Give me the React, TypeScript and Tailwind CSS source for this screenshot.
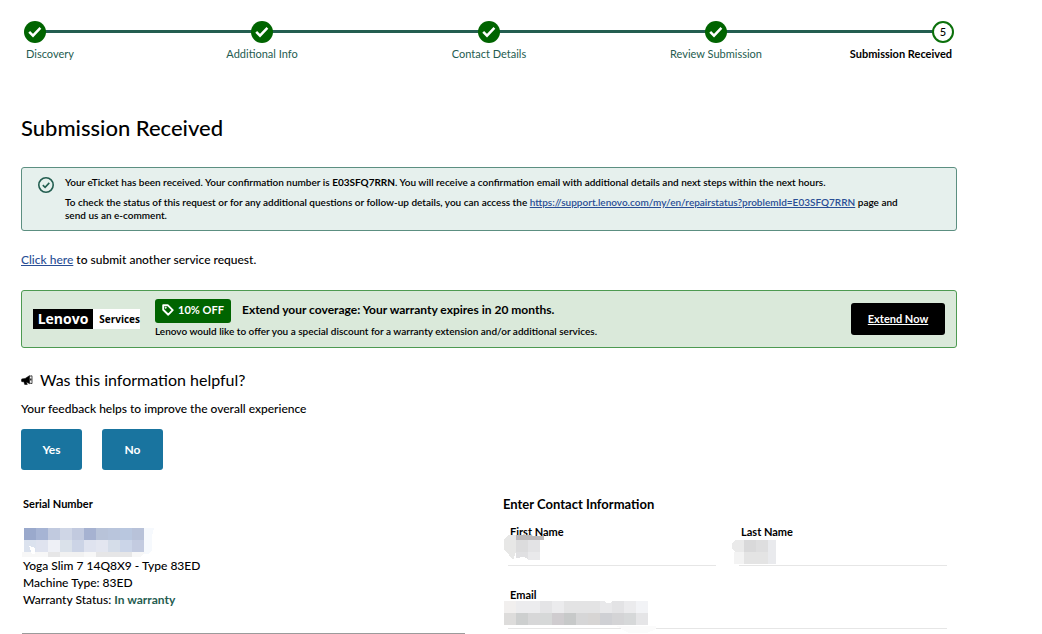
import React from 'react';

const steps = ['Discovery', 'Additional Info', 'Contact Details', 'Review Submission', 'Submission Received'];

const serialMask = [
  ['#9aa9cc', '#a6b4d4', '#c1cadf', '#cfd6e6', '#c2cadf', '#a6b2d1', '#b8c3d9', '#b9c5dc', '#b9c7df', '#b8c2d9'],
  ['#dbe2ee', '#dfe3ef', '#eef0f6', '#dae1ea', '#ccd4e6', '#dfe3ef', '#e3e6f0', '#d5dde9', '#cbd5e8', '#c3cbe0'],
];

const emailMask = [
  ['#f1efee', '#ececee', '#ececee', '#e4e4e6', '#ebebed', '#e3e3e4', '#e3e3e4', '#e3e3e4', '#e8e8ea', '#e3e3e5', '#ebebed', '#f2f3f6'],
  ['#dddcdb', '#cdcfcf', '#d7d7d8', '#d6d8d8', '#cfcccf', '#c7c9c9', '#d6d6d7', '#d7d5d4', '#cfd0d4', '#d4d4d6', '#d6d8d9', '#e5e5e7'],
];

function Cells({ rows, x = 0, y = 0 }: { rows: string[][]; x?: number; y?: number }) {
  return (
    <>
      {rows.map((row, r) =>
        row.map((fill, c) => (
          <rect key={`${r}-${c}`} x={x + c * 12} y={y + r * 12} width="12" height="12" fill={fill} />
        ))
      )}
    </>
  );
}

function StepCircle({ number, done }: { number: number; done: boolean }) {
  if (!done) {
    return (
      <span className="flex h-[22px] w-[22px] items-center justify-center rounded-full border-2 border-[#0b700b] bg-white text-[11px] font-medium text-black">
        {number}
      </span>
    );
  }
  return (
    <span className="flex h-[22px] w-[22px] items-center justify-center rounded-full bg-[#006400]">
      <svg viewBox="0 0 14 12" className="h-3 w-3.5" fill="none" stroke="#fff" strokeWidth="2.5">
        <path d="M1.2 5.8 5 9.6 12.4 1.8" />
      </svg>
    </span>
  );
}

function Stepper() {
  return (
    <nav aria-label="Progress" className="relative mx-3.5">
      <div className="absolute inset-x-0 top-[9px] h-[3px] bg-[#235e50]" />
      <ol className="relative grid grid-cols-[1fr_2fr_2fr_2fr_1fr] text-[11px] leading-4 whitespace-nowrap text-[#255c50]">
        {steps.map((label, i) => {
          const first = i === 0;
          const last = i === steps.length - 1;
          return (
            <li
              key={label}
              className={
                first
                  ? '-ml-[11px] flex flex-col items-start gap-[3px]'
                  : last
                    ? '-mr-[11px] flex flex-col items-end gap-[3px] font-bold text-black'
                    : 'flex flex-col items-center gap-[3px]'
              }
            >
              <StepCircle number={i + 1} done={!last} />
              <span className={first ? 'pl-0.5' : last ? 'pr-0.5' : ''}>{label}</span>
            </li>
          );
        })}
      </ol>
    </nav>
  );
}

function ConfirmationAlert() {
  return (
    <div role="status" className="flex gap-2.5 rounded-[3px] border border-[#5c8f81] bg-[#e6f0ed] py-2 pr-12 pl-[15px] text-[10px] leading-[13px] font-semibold">
      <svg viewBox="0 0 18 18" className="h-[18px] w-[18px] shrink-0" fill="none" stroke="#235e50" strokeWidth="1.6">
        <circle cx="9" cy="9" r="7.2" />
        <path d="m5.8 9.2 2.3 2.2 4.2-4.5" />
      </svg>
      <div>
        <p>
          Your eTicket has been received. Your confirmation number is <strong className="font-bold">E03SFQ7RRN</strong>. You will receive a
          confirmation email with additional details and next steps within the next hours.
        </p>
        <p className="mt-[7px]">
          To check the status of this request or for any additional questions or follow-up details, you can access the{' '}
          <a href="#status" className="text-[#294e95] underline">
            https://support.lenovo.com/my/en/repairstatus?problemId=E03SFQ7RRN
          </a>{' '}
          page and send us an e-comment.
        </p>
      </div>
    </div>
  );
}

function LenovoServices() {
  return (
    <div className="flex h-5 shrink-0 items-center bg-white">
      <span className="flex h-5 w-[60px] items-center justify-center bg-black pb-0.5 font-['Open_Sans',sans-serif] text-[14px] font-bold text-white">
        Lenovo
      </span>
      <span className="w-[47px] text-right font-['Open_Sans',sans-serif] text-[10px] font-bold">Services</span>
    </div>
  );
}

function WarrantyBanner() {
  return (
    <section className="flex items-center rounded-[3px] border border-[#4d9a51] bg-[#dae9da] px-[11px] py-2">
      <LenovoServices />
      <div className="ml-[15px] flex-1">
        <div className="flex items-center gap-[11px]">
          <span className="flex h-6 w-[76px] items-center justify-center gap-1 rounded-[3px] bg-[#006400] pb-0.5 text-[11px] font-bold whitespace-nowrap text-white">
            <svg viewBox="0 0 12 12" className="h-3 w-3" fill="none" stroke="#fff" strokeWidth="1.9" strokeLinejoin="round">
              <path d="M1.2 1.2h4.5l5 5-4.4 4.5-5.1-5Z" />
              <circle cx="3.7" cy="3.7" r=".7" fill="#fff" strokeWidth=".6" />
            </svg>
            10% OFF
          </span>
          <h2 className="pb-0.5 text-[12px] leading-5 font-bold">Extend your coverage: Your warranty expires in 20 months.</h2>
        </div>
        <p className="text-[10px] leading-4 font-semibold">
          Lenovo would like to offer you a special discount for a warranty extension and/or additional services.
        </p>
      </div>
      <a href="#extend" className="flex h-8 w-[94px] items-center justify-center rounded-[3px] bg-black text-[11px] font-bold text-white underline">
        Extend Now
      </a>
    </section>
  );
}

function Bullhorn() {
  return (
    <svg viewBox="0 0 12 10" className="h-2.5 w-3" fill="none" stroke="#000" strokeLinejoin="round">
      <path d="M8.6.6v8.2L5.4 6.9l.9 2.6H3.7L2.9 6.7H.8L.3 5.4l.5-1.5 3.4-.5Z" fill="#000" strokeWidth=".5" />
      <path d="M8.6 1.2 11 .8v7.8l-2.4-.5" strokeWidth=".7" />
      <path d="M9.8 3.6v2" strokeWidth="1.2" />
    </svg>
  );
}

function Feedback() {
  return (
    <section className="mt-5">
      <h2 className="flex items-center gap-[7px] text-[16px] leading-6">
        <Bullhorn />
        Was this information helpful?
      </h2>
      <p className="mt-[7px] text-[12px] leading-5 font-medium">Your feedback helps to improve the overall experience</p>
      <div className="mt-2.5 flex gap-5 text-[12px] font-bold text-white">
        <button type="button" className="h-[41px] w-[61px] rounded-[3px] bg-[#19749f]">
          Yes
        </button>
        <button type="button" className="h-[41px] w-[61px] rounded-[3px] bg-[#19749f]">
          No
        </button>
      </div>
    </section>
  );
}

function ProductInfo() {
  return (
    <section className="pr-2.5 pl-px">
      <h3 className="pl-px text-[11px] leading-5 font-bold">Serial Number</h3>
      <svg viewBox="0 0 132 29" className="mt-3.5 h-[29px] w-[132px]" shapeRendering="crispEdges">
        <path d="M122 0h10l-2 8v14l-3 4h-5Z" fill="#f6f9fd" />
        <path d="M0 24h26v5H0Z M62 24h12v5H62Z M110 24h13l-5 5h-8Z" fill="#f7f7f7" />
        <path d="M26 24h12v5H26Z M74 24h36v5H74Z" fill="#e6e6e7" />
        <path d="M38 24h24v5H38Z" fill="#f1f1f1" />
        <Cells rows={serialMask} x={2} />
        <path d="m7 18 6 2v6h-3Z" fill="#fff" />
      </svg>
      <div className="border-b border-[#9b9b9b] pb-[25px] pl-px text-[12px] leading-[17px] font-medium">
        <p>Yoga Slim 7 14Q8X9 - Type 83ED</p>
        <p>Machine Type: 83ED</p>
        <p>
          Warranty Status: <span className="font-bold text-[#255c50]">In warranty</span>
        </p>
      </div>
    </section>
  );
}

function Field({ id, label, type = 'text', children }: { id: string; label: string; type?: string; children: React.ReactNode }) {
  return (
    <div className="relative">
      <label htmlFor={id} className="block pl-0.5 text-[11px] leading-4 font-bold">
        {label}
      </label>
      <input id={id} type={type} className="block h-[26px] w-full border-b border-[#e6e6e6] bg-transparent text-[12px] outline-none" />
      {children}
    </div>
  );
}

function ContactForm() {
  return (
    <section>
      <h3 className="text-[13px] leading-5 font-bold">Enter Contact Information</h3>
      <form className="mt-2.5 grid grid-cols-2 gap-x-[23px] gap-y-[21px] pr-2.5 pl-[5px]">
        <Field id="first-name" label="First Name">
          <svg viewBox="0 0 40 28" className="absolute top-2.5 -left-1 h-7 w-10" shapeRendering="crispEdges">
            <path d="M0 5 5 1h7v17l-3 8-9-11Z" fill="#e7e7e6" />
            <path d="M12 6h12v12H12Z" fill="#dcdcdd" />
            <path d="M24 6h12v12H24Z" fill="#e3e3e5" />
            <path d="M12 18h12v7l-4-2-8 1Z" fill="#e0e0e2" />
            <path d="M24 18h12v8H24Z" fill="#e9e9eb" />
            <path d="M12 1h16v5H12Z M28 2h12v4H28Z" fill="#bbb8ba" />
          </svg>
        </Field>
        <Field id="last-name" label="Last Name">
          <svg viewBox="0 0 44 24" className="absolute top-4 -left-[7px] h-6 w-11" shapeRendering="crispEdges">
            <path d="m0 3 3-3h9v12H3l-3-3Z" fill="#eaeaea" />
            <path d="M2 12h10v12H2Z" fill="#f3f3f3" />
            <path d="M12 0h12v12H12Z" fill="#d9d9da" />
            <path d="M24 0h12v12H24Z" fill="#dededf" />
            <path d="M12 12h24v12H12Z" fill="#e4e4e4" />
            <path d="M36 0h8v24h-8Z" fill="#e9eaed" />
          </svg>
        </Field>
        <div className="col-span-2">
          <Field id="email" label="Email" type="email">
            <svg viewBox="0 0 152 32" className="absolute top-3.5 -left-1 h-8 w-[152px]" shapeRendering="crispEdges">
              <Cells rows={emailMask} />
              <path d="M100 0h8v1l-2 1h-4Z" fill="#fff" />
              <path d="M112 25h40v3l-9 4h-18Z" fill="#fbfbfb" />
            </svg>
          </Field>
        </div>
      </form>
    </section>
  );
}

export default function App() {
  return (
    <main className="bg-white pt-[21px] pr-[85px] pl-[21px] font-['Lato',sans-serif] text-black">
      <Stepper />
      <h1 className="mt-[50px] text-[22px] leading-8 font-medium">Submission Received</h1>
      <div className="mt-[23px]">
        <ConfirmationAlert />
      </div>
      <p className="mt-[19px] mb-5 text-[12px] leading-5 font-medium">
        <a href="#new-request" className="text-[#294e95] underline">
          Click here
        </a>{' '}
        to submit another service request.
      </p>
      <WarrantyBanner />
      <Feedback />
      <div className="mt-6 grid grid-cols-2 gap-7">
        <ProductInfo />
        <ContactForm />
      </div>
    </main>
  );
}
